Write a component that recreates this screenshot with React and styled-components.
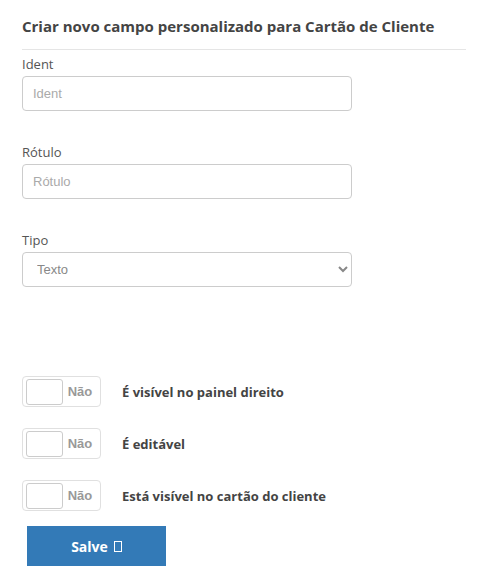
import styled, { createGlobalStyle } from 'styled-components';

const GlobalStyle = createGlobalStyle`
  html, body {
    margin: 0;
    padding: 0;
    background: #fff;
  }
  body {
    font-family: 'Open Sans', 'Liberation Sans', sans-serif;
  }
  * {
    box-sizing: border-box;
  }
`;

const Page = styled.div`
  padding: 16px 12px 0 22px;
`;

const Title = styled.h3`
  margin: 0 0 13px;
  font-size: 15px;
  line-height: 20px;
  font-weight: 700;
  color: #444;
`;

const Rule = styled.hr`
  margin: 0 0 5px;
  border: 0;
  border-top: 1px solid #e5e5e5;
`;

const FormGroup = styled.div`
  margin-bottom: 32px;
  width: 330px;
`;

const Label = styled.label`
  display: block;
  font-size: 13px;
  line-height: 18px;
  color: #555;
  margin-bottom: 3px;
`;

const Input = styled.input`
  display: block;
  width: 100%;
  height: 35px;
  padding: 0 10px;
  font-family: 'Liberation Sans', Arial, sans-serif;
  font-size: 13px;
  color: #555;
  border: 1px solid #ccc;
  border-radius: 4px;
  background: #fff;
  outline: none;

  &::placeholder {
    color: #aaa;
  }
`;

const Select = styled.select`
  display: block;
  width: 100%;
  height: 35px;
  padding: 0 6px 0 10px;
  font-family: 'Liberation Sans', Arial, sans-serif;
  font-size: 13px;
  color: #888;
  border: 1px solid #ccc;
  border-radius: 4px;
  background: #fff;
  outline: none;
`;

const Toggles = styled.div`
  margin-top: 89px;
  display: flex;
  flex-direction: column;
  gap: 21px;
`;

const ToggleRow = styled.div`
  display: flex;
  align-items: center;
  gap: 21px;
`;

const Switch = styled.div`
  width: 79px;
  height: 31px;
  padding: 3px;
  display: flex;
  align-items: center;
  border: 1px solid #e0e0e0;
  border-radius: 4px;
  background: #fff;
`;

const Knob = styled.span`
  width: 37px;
  height: 26px;
  border: 1px solid #ccc;
  border-radius: 3px;
  background: #fff;
`;

const SwitchText = styled.span`
  flex: 1;
  text-align: center;
  font-family: 'Liberation Sans', Arial, sans-serif;
  font-weight: 700;
  font-size: 13px;
  color: #999;
`;

const ToggleLabel = styled.span`
  font-size: 13px;
  font-weight: 700;
  color: #444;
`;

const SaveButton = styled.button`
  margin: 15px 0 0 5px;
  width: 139px;
  height: 40px;
  border: 0;
  border-radius: 0;
  background: #337ab7;
  color: #fff;
  font-family: 'Open Sans', 'Liberation Sans', sans-serif;
  font-weight: 700;
  font-size: 14px;
  display: flex;
  align-items: center;
  justify-content: center;
  gap: 6px;
  cursor: pointer;
`;

const MissingGlyph = styled.span`
  display: inline-block;
  width: 8px;
  height: 11px;
  border: 1px solid #fff;
  margin-top: 1px;
`;

const toggles = [
  'É visível no painel direito',
  'É editável',
  'Está visível no cartão do cliente',
];

export default function App() {
  return (
    <Page>
      <GlobalStyle />
      <Title>Criar novo campo personalizado para Cartão de Cliente</Title>
      <Rule />
      <FormGroup>
        <Label>Ident</Label>
        <Input placeholder='Ident' />
      </FormGroup>
      <FormGroup>
        <Label>Rótulo</Label>
        <Input placeholder='Rótulo' />
      </FormGroup>
      <FormGroup>
        <Label>Tipo</Label>
        <Select defaultValue='text'>
          <option value='text'>Texto</option>
        </Select>
      </FormGroup>
      <Toggles>
        {toggles.map((t) => (
          <ToggleRow key={t}>
            <Switch>
              <Knob />
              <SwitchText>Não</SwitchText>
            </Switch>
            <ToggleLabel>{t}</ToggleLabel>
          </ToggleRow>
        ))}
      </Toggles>
      <SaveButton>
        Salve <MissingGlyph />
      </SaveButton>
    </Page>
  );
}
